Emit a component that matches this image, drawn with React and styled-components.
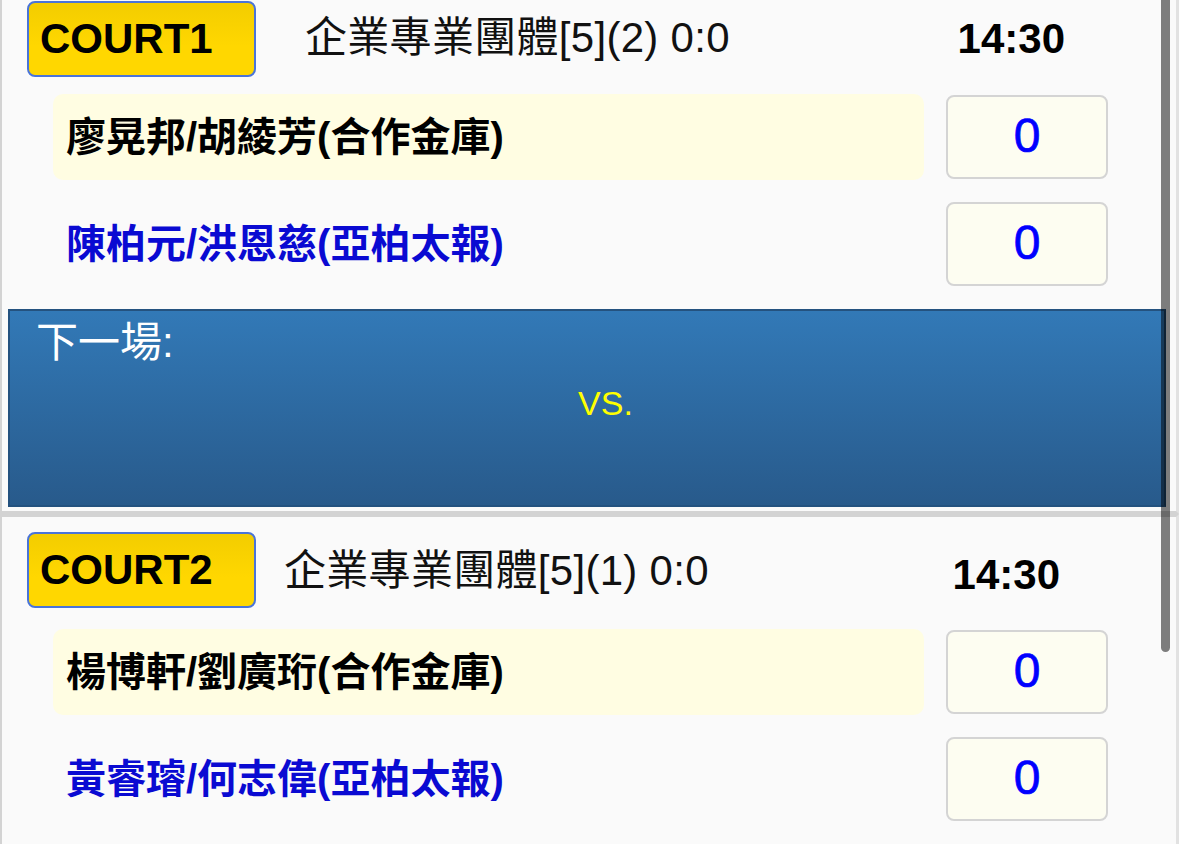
import React from 'react';
import styled, { createGlobalStyle } from 'styled-components';

const GlobalStyle = createGlobalStyle`
  html, body {
    margin: 0;
    padding: 0;
    background: #fafafa;
    overflow: hidden;
  }
  * {
    box-sizing: border-box;
  }
`;

const Viewport = styled.div`
  position: relative;
  width: 1179px;
  height: 844px;
  overflow: hidden;
  background: #fafafa;
`;

// page is scrolled a little, so the first card's top edge is out of view
const Scroller = styled.div`
  margin-top: -17px;
`;

const Card = styled.section`
  background: #fafafa;
  border: 3px solid #d3d3d3;
  border-left-width: 2px;
  border-right-color: #e2e2e2;
  padding: 15px 10px 4px 6px;
`;

const Header = styled.div`
  display: flex;
  align-items: center;
  height: 76px;
  margin-left: 19px;
  margin-bottom: ${props => props.$gap}px;
`;

const CourtLabel = styled.div`
  width: 229px;
  height: 76px;
  display: flex;
  align-items: center;
  padding-left: 11px;
  border: 2px solid #4a74d9;
  border-radius: 8px;
  background: linear-gradient(#f3cd00, #ffd700 60%);
  font-family: 'Liberation Sans', Arial, sans-serif;
  font-weight: bold;
  font-size: 42px;
  color: #000;
`;

const Title = styled.div`
  margin-left: ${props => props.$offset}px;
  padding-bottom: ${props => props.$lift}px;
  font-family: 'Liberation Sans', 'Noto Sans CJK TC', sans-serif;
  font-size: 42px;
  letter-spacing: 0.3px;
  color: #111;
  white-space: nowrap;
`;

const Time = styled.div`
  margin-left: auto;
  margin-right: ${props => props.$right}px;
  padding-top: ${props => props.$drop}px;
  font-family: 'Liberation Sans', Arial, sans-serif;
  font-weight: bold;
  font-size: 42px;
  color: #000;
`;

const Rows = styled.div`
  display: flex;
  flex-direction: column;
  gap: 21px;
  padding: 0 58px 0 45px;
  margin-bottom: 22px;
`;

const Row = styled.div`
  display: flex;
  align-items: center;
  gap: 22px;
`;

const Name = styled.div`
  flex: 1;
  height: 86px;
  display: flex;
  align-items: center;
  padding: 0 0 7px 13px;
  border-radius: 10px;
  background: ${props => (props.$home ? '#fffde2' : 'transparent')};
  color: ${props => (props.$home ? '#000' : '#0a0ad2')};
  font-family: 'Liberation Sans', 'Noto Sans CJK TC', sans-serif;
  font-weight: bold;
  font-size: 40px;
  white-space: nowrap;
`;

const Score = styled.div`
  width: 162px;
  height: 84px;
  display: flex;
  align-items: center;
  justify-content: center;
  padding-bottom: 3px;
  border: 2px solid #d4d4d4;
  border-radius: 8px;
  background: #fdfdf1;
  font-family: 'Liberation Sans', Arial, sans-serif;
  font-size: 48px;
  color: #0000ff;
  -webkit-text-stroke: 0.7px #0000ff;
`;

const NextPanel = styled.div`
  height: 198px;
  padding: 4px 0 0 26px;
  border: 2px solid #24527f;
  border-right-color: #1d4469;
  background: linear-gradient(#3279b7, #285a8b);
  color: #fff;
`;

const NextLabel = styled.div`
  font-family: 'Liberation Sans', 'Noto Sans CJK TC', sans-serif;
  font-size: 42px;
  line-height: 56px;
`;

const Versus = styled.div`
  margin-top: 13px;
  padding-left: 11px;
  text-align: center;
  font-family: 'Liberation Sans', Arial, sans-serif;
  font-size: 34px;
  color: #ffff00;
`;

const ScrollThumb = styled.div`
  position: absolute;
  top: 0;
  right: 9px;
  width: 9px;
  height: 652px;
  border-radius: 0 0 5px 5px;
  background: rgba(0, 0, 0, 0.5);
`;

const courts = [
  {
    court: 'COURT1',
    title: '企業專業團體[5](2) 0:0',
    time: '14:30',
    home: '廖晃邦/胡綾芳(合作金庫)',
    away: '陳柏元/洪恩慈(亞柏太報)',
    titleOffset: 49,
    titleLift: 12,
    timeRight: 101,
    timeDrop: 0,
    headerGap: 17,
    showNext: true,
  },
  {
    court: 'COURT2',
    title: '企業專業團體[5](1) 0:0',
    time: '14:30',
    home: '楊博軒/劉廣珩(合作金庫)',
    away: '黃睿璿/何志偉(亞柏太報)',
    titleOffset: 28,
    titleLift: 8,
    timeRight: 106,
    timeDrop: 9,
    headerGap: 21,
    showNext: false,
  },
];

const CourtCard = ({ data }) => (
  <Card>
    <Header $gap={data.headerGap}>
      <CourtLabel>{data.court}</CourtLabel>
      <Title $offset={data.titleOffset} $lift={data.titleLift}>
        {data.title}
      </Title>
      <Time $right={data.timeRight} $drop={data.timeDrop}>
        {data.time}
      </Time>
    </Header>
    <Rows>
      <Row>
        <Name $home>{data.home}</Name>
        <Score>0</Score>
      </Row>
      <Row>
        <Name>{data.away}</Name>
        <Score>0</Score>
      </Row>
    </Rows>
    {data.showNext && (
      <NextPanel>
        <NextLabel>下一場:</NextLabel>
        <Versus>VS.</Versus>
      </NextPanel>
    )}
  </Card>
);

const App = () => (
  <Viewport>
    <GlobalStyle />
    <Scroller>
      {courts.map(c => (
        <CourtCard key={c.court} data={c} />
      ))}
    </Scroller>
    <ScrollThumb />
  </Viewport>
);

export default App;
